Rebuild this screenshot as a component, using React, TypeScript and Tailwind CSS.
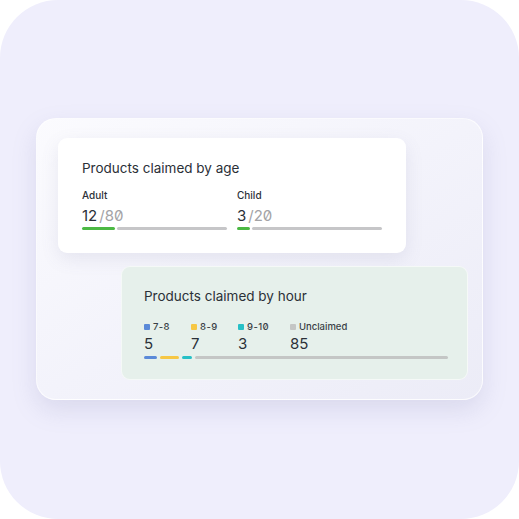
import React from "react";

const font = { fontFamily: "Inter, 'Noto Sans', sans-serif" };

const AgeColumn = ({ label, value, total, pct }: { label: string; value: string; total: string; pct: string }) => (
  <div className="flex flex-col">
    <span className="text-[10px] font-medium leading-[12px] text-[#2b3038]">{label}</span>
    <div className="mt-[6px] text-[15px] leading-[18px] slashed-zero">
      <span className="text-[#2b3038]">{value}</span>
      <span className="ml-[2px] text-[#a3a3a6]">/{total}</span>
    </div>
    <div className="mt-[2px] flex gap-[2px]">
      <div className={`h-[3px] rounded-full bg-[#4cb944] ${pct}`} />
      <div className="h-[3px] flex-1 rounded-full bg-[#c6c6c8]" />
    </div>
  </div>
);

const LegendItem = ({ color, label, value, width, digits }: { color: string; label: string; value: string; width: string; digits?: boolean }) => (
  <div className={`flex flex-col ${width}`}>
    <div className="flex items-center gap-[3px] text-[9.5px] font-medium leading-[12px] text-[#3a3f46] slashed-zero">
      <span className="h-[6px] w-[6px] rounded-[1px]" style={{ background: color }} />
      <span className={digits ? "tracking-[0.4px]" : ""}>{label}</span>
    </div>
    <span className="mt-[2px] text-[15px] leading-[18px] text-[#2b3038]">{value}</span>
  </div>
);

export default function App() {
  return (
    <div className="h-[519px] w-[519px] bg-white" style={font}>
      <div className="h-full w-full rounded-[58px] bg-[#efeefc] pl-[36px] pt-[118px]">
        <div className="flex h-[282px] w-[447px] flex-col rounded-[20px] border border-white/70 bg-gradient-to-br from-[#fbfbfe] via-[#f3f3fb] to-[#ececf7] shadow-[0_10px_24px_rgba(120,120,170,0.18)]">
          <div className="ml-[21px] mt-[19px] h-[115px] w-[348px] rounded-[9px] bg-white px-[24px] pt-[21px] shadow-[0_6px_18px_rgba(110,110,150,0.12)]">
            <h2 className="text-[13.5px] font-normal leading-[18px] text-[#2b3038]">Products claimed by age</h2>
            <div className="mt-[12px] grid grid-cols-2 gap-[10px]">
              <AgeColumn label="Adult" value="12" total="80" pct="w-[33px]" />
              <AgeColumn label="Child" value="3" total="20" pct="w-[13px]" />
            </div>
          </div>
          <div className="ml-[84px] mt-[13px] h-[114px] w-[347px] rounded-[9px] border border-white/60 bg-[#e6f0eb] pl-[22px] pr-[19px] pt-[20px]">
            <h2 className="text-[13.5px] font-normal leading-[18px] text-[#2b3038]">Products claimed by hour</h2>
            <div className="mt-[16px] flex">
              <LegendItem color="#5b8ad8" label="7-8" value="5" width="w-[47px]" digits />
              <LegendItem color="#f6c744" label="8-9" value="7" width="w-[47px]" digits />
              <LegendItem color="#27c0c6" label="9-10" value="3" width="w-[52px]" digits />
              <LegendItem color="#c4c6c5" label="Unclaimed" value="85" width="w-auto" />
            </div>
            <div className="mt-[3px] flex gap-[3px]">
              <div className="h-[3px] w-[13px] rounded-full bg-[#5b8ad8]" />
              <div className="h-[3px] w-[19px] rounded-full bg-[#f6c744]" />
              <div className="h-[3px] w-[10px] rounded-full bg-[#27c0c6]" />
              <div className="h-[3px] flex-1 rounded-full bg-[#c4c6c5]" />
            </div>
          </div>
        </div>
      </div>
    </div>
  );
}
